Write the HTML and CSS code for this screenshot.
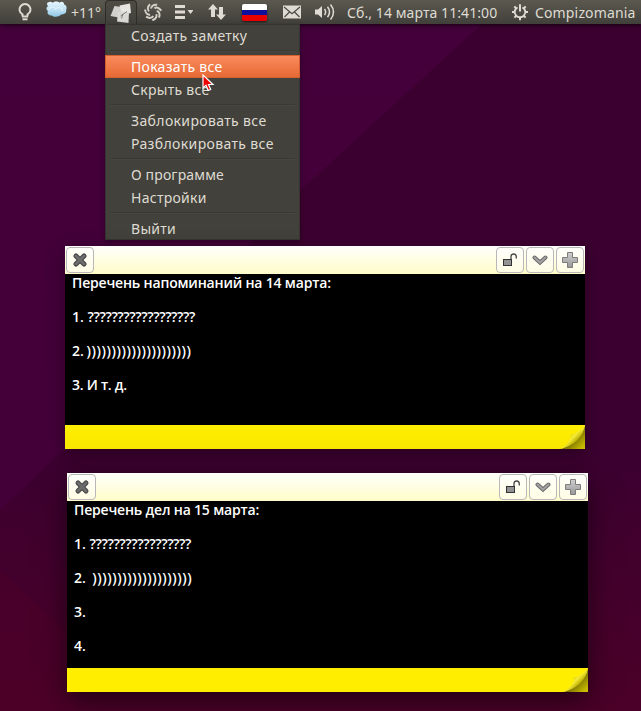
FILE: index.html
```html
<!DOCTYPE html>
<html lang="ru">
<head>
  <meta charset="UTF-8" />
  <title>Desktop notes</title>
  <link rel="stylesheet" href="styles.css">
</head>
<body>

  <svg class="wallpaper" viewBox="0 0 641 711" preserveAspectRatio="none">
    <defs>
      <linearGradient id="base" x1="0" y1="0" x2="0" y2="1">
        <stop offset="0" stop-color="#3b0030" />
        <stop offset="0.65" stop-color="#3c0030" />
        <stop offset="1" stop-color="#4b0028" />
      </linearGradient>
      <linearGradient id="beam" x1="0" y1="0" x2="0" y2="1">
        <stop offset="0" stop-color="#43003a" />
        <stop offset="1" stop-color="#430038" />
      </linearGradient>
    </defs>
    <rect width="641" height="711" fill="url(#base)" />
    <path d="M0 0H508L292 198L65 449L0 510Z" fill="url(#beam)" />
    <path d="M0 570L75 640V711H0Z" fill="#500029" opacity="0.35" />
  </svg>

  <!-- Top panel -->
  <div class="panel">
    <div class="cell bulb">
      <svg width="16" height="20" viewBox="0 0 16 20" fill="none" stroke="#dfdbd2" stroke-width="2">
        <path d="M5.500 14V12.400A5.500 5.500 0 1 1 10.500 12.400V14" />
        <path d="M4.800 14.500h6.400" stroke-width="2" />
        <path d="M5.500 17.300h5" stroke-width="2" />
      </svg>
    </div>
    <div class="cell cloud">
      <svg width="23" height="18" viewBox="0 0 24 20" preserveAspectRatio="none">
        <defs>
          <linearGradient id="sky" x1="0" y1="0" x2="0" y2="1">
            <stop offset="0" stop-color="#e8f7ff" />
            <stop offset="0.6" stop-color="#b9def2" />
            <stop offset="1" stop-color="#8ec5e6" />
          </linearGradient>
        </defs>
        <path d="M2 3C3 1 6 0 8 2C10 0 14 0 15 2C17 0 20 1 20 4C23 5 23 9 22 10C23 14 19 15 17 15C14 18 9 18 7 16C3 16 2 13 3 11C1 9 1 7 3 6Z" fill="url(#sky)" />
        <path d="M4 10C5 6 10 6 11 9C14 6 18 7 18 11" fill="none" stroke="#e6f5fd" stroke-width="1.5" opacity="0.7" />
      </svg>
    </div>
    <div class="cell temp">+11°</div>
    <div class="cell tab">
      <svg width="22" height="20" viewBox="0 0 22 20">
        <path d="M0.500 13L4.500 3L12 4L11 15L6 14Z" fill="#d2d0cd" />
        <path d="M9.500 2.500L20 0.500L21 10L12 12Z" fill="#e6e5e1" />
        <path d="M8 9L19 9L18.500 20L7 18.500Z" fill="#d9d8d5" />
        <path d="M10.500 13L17 8.500M13 11L11.500 15.500" stroke="#77746e" stroke-width="0.900" fill="none" />
      </svg>
    </div>
    <div class="cell swirl">
      <svg width="18" height="18" viewBox="0 0 18 18" fill="none" stroke="#d4d0c6" stroke-width="2">
        <defs><path id="blade" d="M7.200 5.600C7 3.400 9.200 1.300 13.200 1.800" /></defs>
        <use href="#blade" />
        <use href="#blade" transform="rotate(51.4 9 9)" />
        <use href="#blade" transform="rotate(102.9 9 9)" />
        <use href="#blade" transform="rotate(154.3 9 9)" />
        <use href="#blade" transform="rotate(205.7 9 9)" />
        <use href="#blade" transform="rotate(257.1 9 9)" />
        <use href="#blade" transform="rotate(308.6 9 9)" />
      </svg>
    </div>
    <div class="cell list">
      <svg width="18" height="16" viewBox="0 0 18 16" fill="#dfdbd2">
        <path d="M0 1h10v3H0zM0 6.500h10v3H0zM0 12h10v3H0zM12.500 6h6l-3 4z" />
      </svg>
    </div>
    <div class="cell arrows">
      <svg width="18" height="18" viewBox="0 0 18 18" fill="#dfdbd2">
        <path d="M5 1L10 6.500H7V14H3V6.500H0ZM13 17L8 11.500H11V4H15V11.500H18Z" />
      </svg>
    </div>
    <div class="cell"><div class="flag"></div></div>
    <div class="cell mail">
      <svg width="18" height="14" viewBox="0 0 18 14">
        <rect width="18" height="13" y="0.500" fill="#dfdbd2" />
        <path d="M1 2L9 8.800L17 2M1.500 12L6.500 7M16.500 12L11.500 7" fill="none" stroke="#4b4943" stroke-width="1.200" />
      </svg>
    </div>
    <div class="cell sound">
      <svg width="20" height="18" viewBox="0 0 20 18">
        <path d="M0 6.500H3L7 3V15L3 11.500H0Z" fill="#dfdbd2" />
        <path d="M9.500 6Q11.800 9 9.500 12M12.500 3.800Q16.500 9 12.500 14.200M15.500 1.500Q21.500 9 15.500 16.500" fill="none" stroke="#dfdbd2" stroke-width="1.500" />
      </svg>
    </div>
    <div class="cell clock">Сб., 14 марта 11:41:00</div>
    <div class="cell gear">
      <svg width="18" height="18" viewBox="0 0 18 18" fill="none" stroke="#dfdbd2">
        <path d="M6.500 4.300A5.300 5.300 0 1 0 11.500 4.300" stroke-width="1.900" />
        <path d="M9 1.200V8.500" stroke-width="2" />
        <path d="M3.800 9H1M17 9H14.200M9 14.500V17.200M5.300 12.700L3.400 14.600M12.700 12.700L14.600 14.600M5 5.200L3.300 3.400M13 5.200L14.700 3.400" stroke-width="2" />
      </svg>
    </div>
    <div class="cell user">Compizomania</div>
  </div>

  <!-- Indicator menu -->
  <div class="menu">
    <div class="item">Создать заметку</div>
    <div class="separator"></div>
    <div class="item active">Показать все</div>
    <div class="item">Скрыть все</div>
    <div class="separator"></div>
    <div class="item wide">Заблокировать все</div>
    <div class="item wide">Разблокировать все</div>
    <div class="separator"></div>
    <div class="item narrow">О программе</div>
    <div class="item">Настройки</div>
    <div class="separator"></div>
    <div class="item">Выйти</div>
  </div>

  <svg class="cursor" width="13" height="18" viewBox="0 0 13 18">
    <path d="M1 1V14L4 11.300L6.300 16.500L8.700 15.500L6.500 10.500H11Z" fill="#f00000" stroke="#fff" stroke-width="1.200" />
  </svg>

  <svg class="symbols" width="0" height="0">
    <defs>
      <linearGradient id="metal" x1="0" y1="0" x2="0" y2="1">
        <stop offset="0" stop-color="#cfcfcf" />
        <stop offset="1" stop-color="#989898" />
      </linearGradient>
      <linearGradient id="shade" gradientUnits="userSpaceOnUse" x1="10" y1="11" x2="22" y2="23">
        <stop offset="0" stop-color="#6f6600" />
        <stop offset="0.450" stop-color="#8e8400" />
        <stop offset="1" stop-color="#cabd00" />
      </linearGradient>
      <linearGradient id="fold" gradientUnits="userSpaceOnUse" x1="9" y1="8" x2="17" y2="16">
        <stop offset="0" stop-color="#cfc200" />
        <stop offset="0.500" stop-color="#f7eb35" />
        <stop offset="1" stop-color="#b5a900" />
      </linearGradient>
      <symbol id="close" viewBox="0 0 16 16">
        <path d="M4 4L12 12M12 4L4 12" stroke="#484848" stroke-width="5" stroke-linecap="round" />
        <path d="M4 4L12 12M12 4L4 12" stroke="#6c6c6c" stroke-width="2.800" stroke-linecap="round" />
      </symbol>
      <symbol id="lock" viewBox="0 0 16 16">
        <path d="M9 7V4.500Q9 2 11.500 2Q14.300 2 14.300 5V6.500" fill="none" stroke="#444" stroke-width="1.300" />
        <rect x="1.500" y="7.500" width="8" height="6" fill="#929292" stroke="#333" />
      </symbol>
      <symbol id="down" viewBox="0 0 16 16">
        <path d="M2.500 5.500L8 10.500L13.500 5.500" fill="none" stroke="#666" stroke-width="4" stroke-linecap="round" />
        <path d="M2.500 5.500L8 10.500L13.500 5.500" fill="none" stroke="#a2a2a2" stroke-width="2.200" stroke-linecap="round" />
      </symbol>
      <symbol id="plus" viewBox="0 0 16 16">
        <path d="M5.500 0.500h5v5h5v5h-5v5h-5v-5h-5v-5h5z" fill="url(#metal)" stroke="#7c7c7c" />
      </symbol>
      <symbol id="curl" viewBox="0 0 25 24">
        <path d="M25 0Q22 17 0 24H25Z" fill="url(#shade)" />
        <path d="M25 0Q17 9 11 9.500Q11 18 0 24Q21 19 25 0Z" fill="url(#fold)" />
      </symbol>
    </defs>
  </svg>

  <!-- Sticky notes -->
  <div class="note note-first">
    <div class="note-header">
      <div class="btn"><svg><use href="#close" /></svg></div>
      <div class="spacer"></div>
      <div class="btn"><svg><use href="#lock" /></svg></div>
      <div class="btn"><svg><use href="#down" /></svg></div>
      <div class="btn"><svg><use href="#plus" /></svg></div>
    </div>
    <div class="note-body">
      <p class="title">Перечень напоминаний на 14 марта:</p>
      <p>1. <span class="marks">??????????????????</span></p>
      <p>2. <span class="parens">)))))))))))))))))))))</span></p>
      <p class="etc">3. И т. д.</p>
    </div>
    <div class="note-footer"><svg class="curl"><use href="#curl" /></svg></div>
  </div>

  <div class="note note-second">
    <div class="note-header">
      <div class="btn"><svg><use href="#close" /></svg></div>
      <div class="spacer"></div>
      <div class="btn"><svg><use href="#lock" /></svg></div>
      <div class="btn"><svg><use href="#down" /></svg></div>
      <div class="btn"><svg><use href="#plus" /></svg></div>
    </div>
    <div class="note-body">
      <p class="title">Перечень дел на 15 марта:</p>
      <p>1. <span class="marks">?????????????????</span></p>
      <p>2.  <span class="parens">))))))))))))))))))))</span></p>
      <p>3.</p>
      <p>4.</p>
    </div>
    <div class="note-footer"><svg class="curl"><use href="#curl" /></svg></div>
  </div>

</body>
</html>
```
FILE: styles.css
```css
body {
  margin: 0;
  width: 641px;
  height: 711px;
  position: relative;
  overflow: hidden;
  background: #3c0030;
  color: #dfdbd2;
  font-family: "Noto Sans", "Open Sans", sans-serif;
  font-size: 14px;
}

svg {
  display: block;
}

.wallpaper {
  position: absolute;
  width: 641px;
  height: 711px;
}

/* Top panel */
.panel {
  position: relative;
  display: grid;
  grid-template-columns: 40px 25px 35px 32px 32px 30px 36px 39px 36px 29px 168px 26px 1fr;
  height: 24px;
  padding-left: 5px;
  background: linear-gradient(#5b594f, #403f3a);
  box-shadow: 0 1px 4px rgba(0, 0, 0, 0.7);
  white-space: nowrap;
}

.cell {
  display: flex;
  align-items: center;
  justify-content: center;
}

.temp,
.user {
  justify-content: flex-start;
}

.temp {
  padding-left: 1px;
}

.user {
  padding-left: 2px;
  letter-spacing: 0.15px;
}

.cloud {
  padding-bottom: 4px;
  margin-left: -2px;
}

.clock {
  justify-content: flex-start;
  padding-left: 8px;
  letter-spacing: 0.08px;
}

.tab {
  box-sizing: border-box;
  border: 1px solid #2f2e2a;
  border-bottom: none;
  border-radius: 4px 4px 0 0;
  background: linear-gradient(#4d4b44, #42413b);
}

.flag {
  width: 25px;
  height: 17px;
  border-radius: 2px;
  background: linear-gradient(#fff 0 33%, #10109c 33% 67%, #e80000 67%);
  box-shadow: 0 1px 2px rgba(0, 0, 0, 0.6);
}

/* Indicator menu */
.menu {
  position: absolute;
  left: 105px;
  top: 24px;
  width: 195px;
  height: 216px;
  background: #42413b;
  box-shadow: inset 0 0 0 1px #35342f, 0 2px 5px rgba(0, 0, 0, 0.3);
}

.item {
  box-sizing: border-box;
  height: 23px;
  padding-left: 26px;
  line-height: 23px;
  letter-spacing: 0.28px;
  white-space: nowrap;
}

.wide {
  letter-spacing: 0.36px;
}

.narrow {
  letter-spacing: 0.15px;
}

.active {
  border: 1px solid #d4602f;
  padding-left: 25px;
  line-height: 21px;
  background: linear-gradient(#fa8a5c, #e66a35);
  color: #fff;
}

.separator {
  height: 2px;
  margin: 3px 5px;
  background: linear-gradient(#3a3933 50%, #474640 50%);
}

.cursor {
  position: absolute;
  left: 202px;
  top: 74px;
}

.symbols {
  position: absolute;
}

/* Sticky notes */
.note {
  position: absolute;
  display: flex;
  flex-direction: column;
  background: #000;
}

.note-first {
  left: 65px;
  top: 246px;
  width: 520px;
  height: 203px;
  box-shadow: 0 5px 18px rgba(0, 0, 0, 0.3);
}

.note-second {
  left: 67px;
  top: 473px;
  width: 521px;
  height: 219px;
  box-shadow: 0 8px 26px rgba(0, 0, 0, 0.55);
}

.note-header {
  box-sizing: border-box;
  display: flex;
  gap: 2px;
  height: 28px;
  padding: 1px;
  background: linear-gradient(#fffffc, #fffcc8);
}

.spacer {
  flex: 1;
}

.btn {
  box-sizing: border-box;
  display: flex;
  align-items: center;
  justify-content: center;
  width: 28px;
  height: 26px;
  border: 1px solid #b9b7b9;
  border-radius: 4px;
  background: linear-gradient(#fffffb, #fffde4);
}

.btn svg {
  width: 16px;
  height: 16px;
}

.note-body {
  flex: 1;
  padding-left: 7px;
  color: #fff;
  font-family: "Open Sans", "Noto Sans", sans-serif;
  font-weight: 600;
}

.note-body p {
  height: 17px;
  margin: 0 0 17px;
  line-height: 17px;
  white-space: pre;
}

.note-body p:last-child {
  margin-bottom: 0;
}

.title {
  letter-spacing: -0.18px;
}

.etc {
  letter-spacing: -0.25px;
}

.marks {
  letter-spacing: -0.39px;
}

.parens {
  margin-left: -1px;
  letter-spacing: 0.57px;
}

.note-footer {
  display: flex;
  justify-content: flex-end;
  height: 24px;
  background: linear-gradient(#ffee00, #f9e800);
}

.note-second .note-footer {
  background: #ffee00;
}

.curl {
  width: 25px;
  height: 24px;
}
```
